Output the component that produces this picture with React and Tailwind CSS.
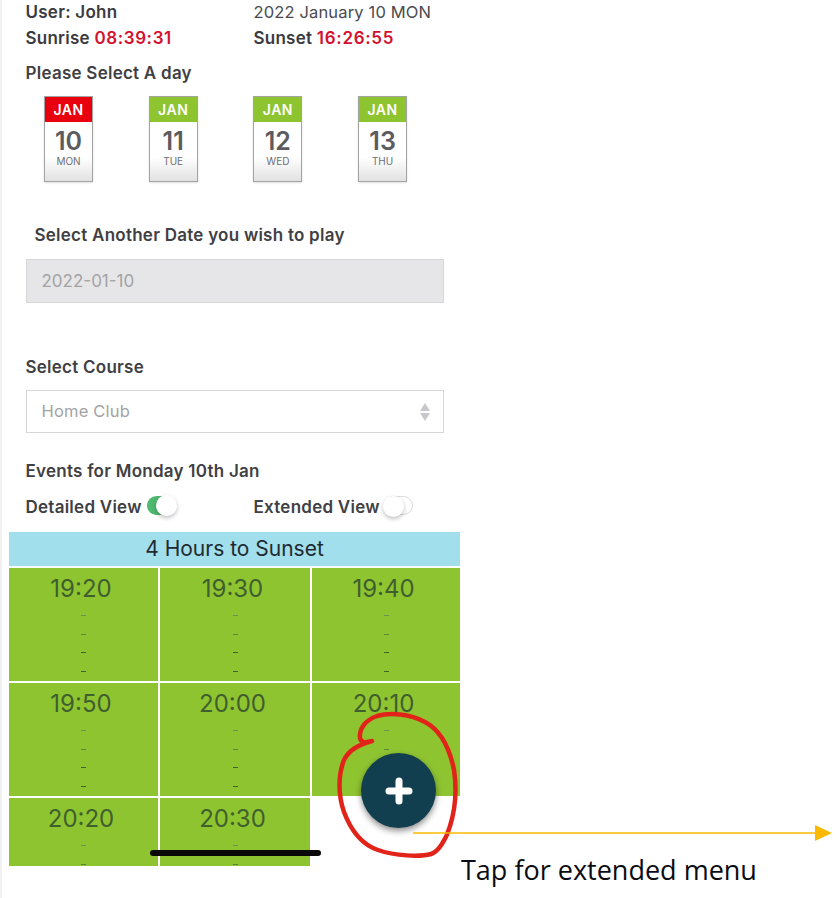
const font = { fontFamily: "Inter, 'Liberation Sans', sans-serif" };

function DayCard({ day, dow, red }) {
  return (
    <div className="w-[49px] h-[86px] border border-[#a3a3a3] flex flex-col shadow-[0_1px_2px_rgba(0,0,0,0.12)]">
      <div className={`h-[25px] flex items-center justify-center text-white text-[14px] font-semibold tracking-[0.5px] ${red ? "bg-[#e8000f]" : "bg-[#8fc431]"}`}>JAN</div>
      <div className="flex-1 flex flex-col items-center bg-gradient-to-b from-white from-60% to-[#e2e2e2]">
        <div className="text-[25px] leading-[25px] font-semibold text-[#5c5c60] mt-[7px]">{day}</div>
        <div className="text-[10px] leading-[12px] text-[#6e6e72] mt-[1px]">{dow}</div>
      </div>
    </div>
  );
}

function Cell({ time, clip }) {
  return (
    <div className={`bg-[#8fc431] flex flex-col items-center overflow-hidden ${clip ? "h-[68px]" : "h-[113px]"}`}>
      <div className="text-[24px] leading-[28px] text-[#3f5f2e] mt-[7px] -ml-[5px]">{time}</div>
      <div className="flex flex-col items-center mt-[12px] gap-[17.5px]">
        {[0, 1, 2, 3].map((i) => (
          <div key={i} className={`w-[5px] h-[1px] ${i === 0 ? "bg-[#6f8f5a]" : i === 1 ? "bg-[#5f8445]" : "bg-[#3f5f2e]"}`} />
        ))}
      </div>
    </div>
  );
}

function Toggle({ on }) {
  return (
    <div className={`relative w-[29px] h-[19px] -mt-[4px] rounded-full ${on ? "bg-[#4fb96f]" : "bg-white border border-[#dcdcdc]"}`}>
      <div className={`absolute top-[-1px] h-[21px] w-[21px] rounded-full bg-white shadow-[0_2px_4px_rgba(0,0,0,0.25)] ${on ? "left-[9px]" : "left-[-2px]"}`} />
    </div>
  );
}

const bold = "text-[17px] leading-[20px] tracking-[0.25px] font-semibold";

export default function App() {
  return (
    <div style={font} className="relative w-[838px] h-[898px] bg-white overflow-hidden">
      <div className="w-[460px] h-full border-l-2 border-[#f1f1f1] pt-[2px]">
        <div className={`pl-[23.5px] grid grid-cols-[228px_1fr] ${bold} text-[#3a3a40]`}>
          <div>User: John</div>
          <div className="font-normal text-[16.5px] tracking-[0.15px] text-[#4a4a4e]">2022 January 10 MON</div>
        </div>
        <div className={`pl-[23.5px] mt-[6px] grid grid-cols-[228px_1fr] ${bold} text-[#3a3a40]`}>
          <div>Sunrise <span className="text-[#d3112f] tracking-[0.6px]">08:39:31</span></div>
          <div>Sunset <span className="text-[#d3112f] tracking-[0.7px]">16:26:55</span></div>
        </div>
        <div className={`pl-[23.5px] mt-[15px] ${bold} text-[#3f3f44]`}>Please Select A day</div>
        <div className="pl-[42px] mt-[13px] flex gap-[55.7px]">
          <DayCard day="10" dow="MON" red />
          <DayCard day="11" dow="TUE" />
          <DayCard day="12" dow="WED" />
          <DayCard day="13" dow="THU" />
        </div>
        <div className={`pl-[32.5px] mt-[43px] ${bold} text-[#3f3f44]`}>Select Another Date you wish to play</div>
        <div className="ml-[23.5px] mt-[14px] w-[418.5px] h-[44px] bg-[#e6e6e8] border border-[#d6d6d6] flex items-center pl-[15px] pt-[1px] text-[17px] text-[#a3a3a6]">2022-01-10</div>
        <div className={`pl-[23.5px] mt-[54px] ${bold} text-[#3f3f44]`}>Select Course</div>
        <div className="ml-[23.5px] mt-[13px] w-[418.5px] h-[43px] bg-white border border-[#d6d6d6] flex items-center justify-between pl-[15px] pr-[13px] text-[16.5px] tracking-[0.2px] text-[#a3a3a6]">
          <span>Home Club</span>
          <svg width="10" height="18" viewBox="0 0 10 18" fill="#c8c8cc"><path d="M5 0 10 8H0ZM5 18 0 10h10Z" /></svg>
        </div>
        <div className={`pl-[23.5px] mt-[28px] ${bold} text-[#3f3f44]`}>Events for Monday 10th Jan</div>
        <div className={`pl-[23.5px] mt-[14px] grid grid-cols-[228px_1fr] ${bold} text-[#3f3f44] h-[24px]`}>
          <div className="flex items-center gap-[5px]"><span>Detailed View</span><Toggle on /></div>
          <div className="flex items-center gap-[4px]"><span>Extended View</span><Toggle /></div>
        </div>
        <div className="ml-[7px] mt-[13px] h-[34px] bg-[#a2dfed] flex items-center justify-center text-[21px] text-[#1f2a30]">4 Hours to Sunset</div>
        <div className="ml-[7px] mt-[2px] grid grid-cols-[149px_150px_148px] gap-[2px]">
          <Cell time="19:20" />
          <Cell time="19:30" />
          <Cell time="19:40" />
          <Cell time="19:50" />
          <Cell time="20:00" />
          <Cell time="20:10" />
          <Cell time="20:20" clip />
          <Cell time="20:30" clip />
        </div>
      </div>

      <div className="absolute left-[150px] top-[850px] w-[171px] h-[6px] rounded-full bg-[#0a0a0a]" />

      <div className="absolute left-[361px] top-[753px] w-[75px] h-[75px] rounded-full bg-[#113f50] shadow-[0_3px_6px_rgba(0,0,0,0.45)] flex items-center justify-center">
        <svg width="28" height="28" viewBox="0 0 28 28" fill="none" stroke="white" strokeWidth="7" strokeLinecap="round"><path d="M14 4v20M4 14h20" /></svg>
      </div>

      <svg className="absolute left-0 top-0 pointer-events-none" width="838" height="898" fill="none">
        <path d="M372 741C366 743 361 743 360 738C359 728 366 720 377 716C390 712 410 714 425 722C442 731 450 750 454 770C457 790 455 810 450 826C446 840 438 852 431 854C420 857 395 856 378 850C360 844 350 828 344 812C338 795 338 775 344 760C349 750 358 745 372 741" stroke="#e2231a" strokeWidth="4.5" strokeLinecap="round" strokeLinejoin="round" />
        <path d="M413 833H816" stroke="#fcb900" strokeWidth="1.5" />
        <path d="M815 825l17 8-17 8z" fill="#fcb900" />
      </svg>

      <div className="absolute left-[461px] top-[852px] text-[27px] leading-[36px] text-[#0b0b14]" style={{ fontFamily: "'Open Sans', 'Noto Sans', sans-serif" }}>Tap for extended menu</div>
    </div>
  );
}
